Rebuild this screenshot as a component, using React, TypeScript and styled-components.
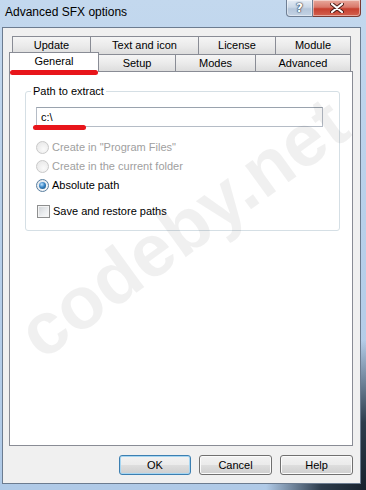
import React from 'react';
import styled, { createGlobalStyle } from 'styled-components';

const GlobalStyle = createGlobalStyle`
  html, body {
    margin: 0;
    padding: 0;
  }
  body {
    width: 366px;
    height: 490px;
    overflow: hidden;
    font-family: "Liberation Sans", Arial, sans-serif;
  }
`;

const Window = styled.div`
  position: relative;
  width: 366px;
  height: 490px;
  display: flex;
  flex-direction: column;
  overflow: hidden;
  background:
    radial-gradient(ellipse 100px 150px at 100% 100%, #17212c 0%, #2d3c4c 45%, rgba(60, 80, 100, 0) 100%),
    linear-gradient(180deg, #c3d8ee 0%, #b8d0ea 45%, #b0cae7 100%);
`;

const TitleBar = styled.div`
  height: 27px;
  flex: none;
  display: flex;
  justify-content: space-between;
  align-items: flex-start;
  padding: 0 5px;
`;

const Title = styled.span`
  margin-top: 5px;
  font-size: 12px;
  line-height: 14px;
  color: #000;
`;

const CaptionButtons = styled.div`
  display: flex;
`;

const CaptionButton = styled.div<{ $close?: boolean }>`
  width: ${p => (p.$close ? 48 : 27)}px;
  height: 17px;
  box-sizing: border-box;
  display: flex;
  align-items: center;
  justify-content: center;
  border: 1px solid ${p => (p.$close ? '#7a3a33' : '#6f7f94')};
  border-top: none;
  border-left-width: ${p => (p.$close ? 0 : 1)}px;
  border-radius: ${p => (p.$close ? '0 0 4px 0' : '0 0 0 4px')};
  background: ${p =>
    p.$close
      ? 'linear-gradient(180deg, #e8a99d 0%, #d9786a 45%, #c7402f 55%, #d3614f 100%)'
      : 'linear-gradient(180deg, #e4ecf5 0%, #cbd8e7 45%, #b5c6da 55%, #c4d3e4 100%)'};
  box-shadow: inset 0 0 0 1px rgba(255, 255, 255, 0.45);
`;

const HelpGlyph = styled.span`
  font-family: "DejaVu Sans", sans-serif;
  font-weight: bold;
  font-size: 12px;
  line-height: 12px;
  color: #fff;
  text-shadow: 0 0 1px #2d3d52, 0 0 1px #2d3d52, 0 0 2px #2d3d52;
`;

const Client = styled.div`
  flex: 1;
  display: flex;
  flex-direction: column;
  margin: 0 5px 6px 2px;
  padding: 8px 7px 8px 6px;
  background: #f0f0f0;
  border: 1px solid #6c7c90;
`;

const TabRow = styled.div<{ $indent: number; $height: number }>`
  display: flex;
  align-items: flex-end;
  height: ${p => p.$height}px;
  padding-left: ${p => p.$indent}px;
`;

const Tab = styled.div<{ $w: number; $first?: boolean; $active?: boolean }>`
  position: relative;
  box-sizing: border-box;
  width: ${p => p.$w}px;
  height: ${p => (p.$active ? '20px' : '100%')};
  margin-top: ${p => (p.$active ? -2 : 0)}px;
  margin-bottom: ${p => (p.$active ? -1 : 0)}px;
  z-index: ${p => (p.$active ? 2 : 0)};
  border: 1px solid #898c95;
  border-bottom: none;
  border-left-width: ${p => (p.$first ? 1 : 0)}px;
  background: ${p => (p.$active ? '#fff' : 'linear-gradient(180deg, #f5f5f5 0%, #ebebeb 50%, #dddddd 100%)')};
  font-size: 11px;
  line-height: 15px;
  padding-top: 1px;
  text-align: center;
  color: #000;
`;

const RedMark = styled.div<{ $left: number; $top: number; $w: number }>`
  position: absolute;
  left: ${p => p.$left}px;
  top: ${p => p.$top}px;
  width: ${p => p.$w}px;
  height: 5px;
  border-radius: 3px;
  background: #e8151b;
  z-index: 6;
`;

const Panel = styled.div`
  flex: 1;
  background: #fff;
  border: 1px solid #898c95;
  padding: 13px 12px 0 15px;
`;

const Group = styled.fieldset`
  margin: 0;
  min-width: 0;
  border: 1px solid #d5dfe5;
  border-radius: 3px;
  padding: 9px 16px 9px 10px;
`;

const GroupLegend = styled.legend`
  margin-left: -5px;
  padding: 0 2px;
  font-size: 11px;
  line-height: 13px;
  color: #000;
`;

const InputWrap = styled.div`
  position: relative;
  margin-bottom: 11px;
`;

const PathInput = styled.div`
  box-sizing: border-box;
  height: 20px;
  border: 1px solid #b5bcc6;
  border-top-color: #9aa3ae;
  padding-left: 4px;
  font-size: 11px;
  line-height: 18px;
  color: #000;
`;

const OptionRow = styled.div<{ $gapTop?: number }>`
  display: flex;
  align-items: center;
  height: 19px;
  margin-top: ${p => p.$gapTop ?? 0}px;
`;

const Radio = styled.span<{ $checked?: boolean; $disabled?: boolean }>`
  position: relative;
  box-sizing: border-box;
  width: 13px;
  height: 13px;
  flex: none;
  border-radius: 50%;
  border: 1px solid ${p => (p.$disabled ? '#c9c9c9' : '#5a7fa0')};
  background: ${p =>
    p.$disabled
      ? 'radial-gradient(circle at 60% 65%, #fafafa 0%, #e4e4e4 100%)'
      : 'radial-gradient(circle at 60% 65%, #ffffff 0%, #d9dfe6 100%)'};
  &::after {
    content: '';
    display: ${p => (p.$checked ? 'block' : 'none')};
    position: absolute;
    left: 2px;
    top: 2px;
    width: 7px;
    height: 7px;
    border-radius: 50%;
    background: radial-gradient(circle at 40% 35%, #bfe3ff 0%, #3a86c6 45%, #11466f 100%);
  }
`;

const Checkbox = styled.span`
  box-sizing: border-box;
  width: 13px;
  height: 13px;
  flex: none;
  margin-left: 1px;
  border: 1px solid #8e8f8f;
  background: linear-gradient(135deg, #cfd2d6 0%, #eceef0 60%, #f9f9f9 100%);
  box-shadow: inset 0 0 0 1px #f4f4f4;
`;

const OptionLabel = styled.span<{ $disabled?: boolean }>`
  margin-left: 3px;
  font-size: 11px;
  line-height: 13px;
  color: ${p => (p.$disabled ? '#a0a0a0' : '#000')};
`;

const ButtonRow = styled.div`
  display: flex;
  justify-content: flex-end;
  gap: 8px;
  margin-top: 9px;
`;

const DialogButton = styled.div<{ $w: number; $default?: boolean }>`
  box-sizing: border-box;
  width: ${p => p.$w}px;
  height: 20px;
  border: 1px solid ${p => (p.$default ? '#3c7fb1' : '#707070')};
  border-radius: 3px;
  background: linear-gradient(180deg, #f2f2f2 0%, #ebebeb 48%, #dddddd 52%, #cfcfcf 100%);
  box-shadow: inset 0 0 0 1px ${p => (p.$default ? '#a6d6f2' : '#fbfbfb')};
  font-size: 11px;
  line-height: 18px;
  text-align: center;
  color: #000;
`;

// diagonal site watermark laid over the dialog
const Watermark = styled.div`
  position: absolute;
  left: 183px;
  top: 228px;
  transform: translate(-50%, -50%) rotate(-36deg);
  font-family: "Liberation Sans", Arial, sans-serif;
  font-weight: bold;
  font-size: 74px;
  line-height: 58px;
  white-space: nowrap;
  color: rgba(0, 0, 0, 0.06);
  pointer-events: none;
  z-index: 5;
`;

const topTabs = [
  { label: 'Update', w: 79 },
  { label: 'Text and icon', w: 108 },
  { label: 'License', w: 77 },
  { label: 'Module', w: 75 },
];

const bottomTabs = [
  { label: 'General', w: 90, active: true },
  { label: 'Setup', w: 77 },
  { label: 'Modes', w: 80 },
  { label: 'Advanced', w: 95 },
];

export default function App() {
  return (
    <>
      <GlobalStyle />
      <Window>
        <TitleBar>
          <Title>Advanced SFX options</Title>
          <CaptionButtons>
            <CaptionButton>
              <HelpGlyph>?</HelpGlyph>
            </CaptionButton>
            <CaptionButton $close>
              <svg width="14" height="10" viewBox="0 0 14 10">
                <path d="M2 1 L12 9 M12 1 L2 9" stroke="#4a1c17" strokeWidth="4" strokeLinecap="round" />
                <path d="M2 1 L12 9 M12 1 L2 9" stroke="#ffffff" strokeWidth="2.2" strokeLinecap="round" />
              </svg>
            </CaptionButton>
          </CaptionButtons>
        </TitleBar>

        <Client>
          <TabRow $indent={3} $height={18}>
            {topTabs.map((t, i) => (
              <Tab key={t.label} $w={t.w} $first={i === 0}>{t.label}</Tab>
            ))}
          </TabRow>
          <TabRow $indent={0} $height={17}>
            {bottomTabs.map((t, i) => (
              <Tab key={t.label} $w={t.w} $first={i === 0} $active={t.active}>
                {t.label}
                {t.active && <RedMark $left={0} $top={17} $w={88} />}
              </Tab>
            ))}
          </TabRow>

          <Panel>
            <Group>
              <GroupLegend>Path to extract</GroupLegend>
              <InputWrap>
                <PathInput>c:\</PathInput>
                <RedMark $left={-3} $top={18} $w={53} />
              </InputWrap>
              <OptionRow>
                <Radio $disabled />
                <OptionLabel $disabled>Create in "Program Files"</OptionLabel>
              </OptionRow>
              <OptionRow>
                <Radio $disabled />
                <OptionLabel $disabled>Create in the current folder</OptionLabel>
              </OptionRow>
              <OptionRow>
                <Radio $checked />
                <OptionLabel>Absolute path</OptionLabel>
              </OptionRow>
              <OptionRow $gapTop={7}>
                <Checkbox />
                <OptionLabel>Save and restore paths</OptionLabel>
              </OptionRow>
            </Group>
          </Panel>

          <ButtonRow>
            <DialogButton $w={72} $default>OK</DialogButton>
            <DialogButton $w={73}>Cancel</DialogButton>
            <DialogButton $w={73}>Help</DialogButton>
          </ButtonRow>
        </Client>

        <Watermark>codeby.net</Watermark>
      </Window>
    </>
  );
}
